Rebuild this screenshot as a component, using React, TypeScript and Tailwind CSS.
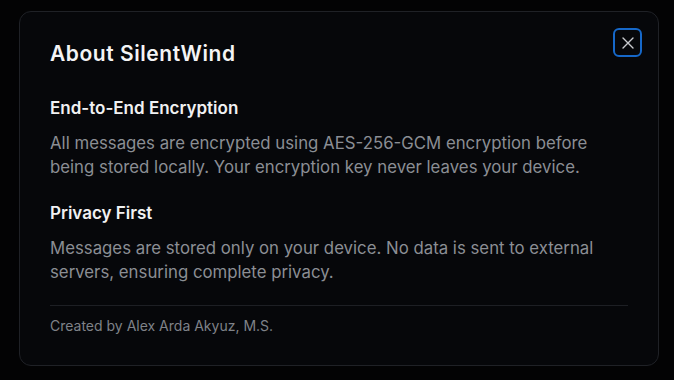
const AboutDialog = () => {
  return (
    <div className="relative ml-[19px] mt-[11px] h-[355px] w-[640px] rounded-xl border border-[#1f2126] bg-[#06070a] px-[30px] pt-7">
      <button
        type="button"
        className="absolute right-4 top-4 flex h-[29px] w-[29px] items-center justify-center rounded-md border-2 border-[#1668c9]"
      >
        <svg width="12" height="12" viewBox="0 0 12 12" fill="none" stroke="#c9cbcf" strokeWidth="1.4" strokeLinecap="round">
          <path d="M1 1l10 10M11 1L1 11" />
        </svg>
      </button>

      <h2 className="text-[21px] leading-7 font-semibold tracking-[0.55px] text-[#f4f4f5]">About SilentWind</h2>

      <div className="mt-7">
        <h3 className="text-[17px] leading-6 font-semibold text-[#f1f1f2]">End-to-End Encryption</h3>
        <p className="mt-[11px] text-[16.8px] leading-6 text-[#8b8e94]">
          All messages are encrypted using AES-256-GCM encryption before being stored locally. Your encryption key never leaves your device.
        </p>
      </div>

      <div className="mt-[22px]">
        <h3 className="text-[17px] leading-6 font-semibold text-[#f1f1f2]">Privacy First</h3>
        <p className="mt-[11px] text-[16.8px] leading-6 text-[#8b8e94]">
          Messages are stored only on your device. No data is sent to external servers, ensuring complete privacy.
        </p>
      </div>

      <div className="mt-[21px] border-t border-[#1d1f24] pt-[10px]">
        <p className="text-sm leading-5 text-[#7f8288]">Created by Alex Arda Akyuz, M.S.</p>
      </div>
    </div>
  );
};

export default function App() {
  return (
    <div className="h-[380px] w-[674px] overflow-hidden bg-[#030304] pt-px font-['Inter',sans-serif]">
      <div className="-mt-px">
        <AboutDialog />
      </div>
    </div>
  );
}
